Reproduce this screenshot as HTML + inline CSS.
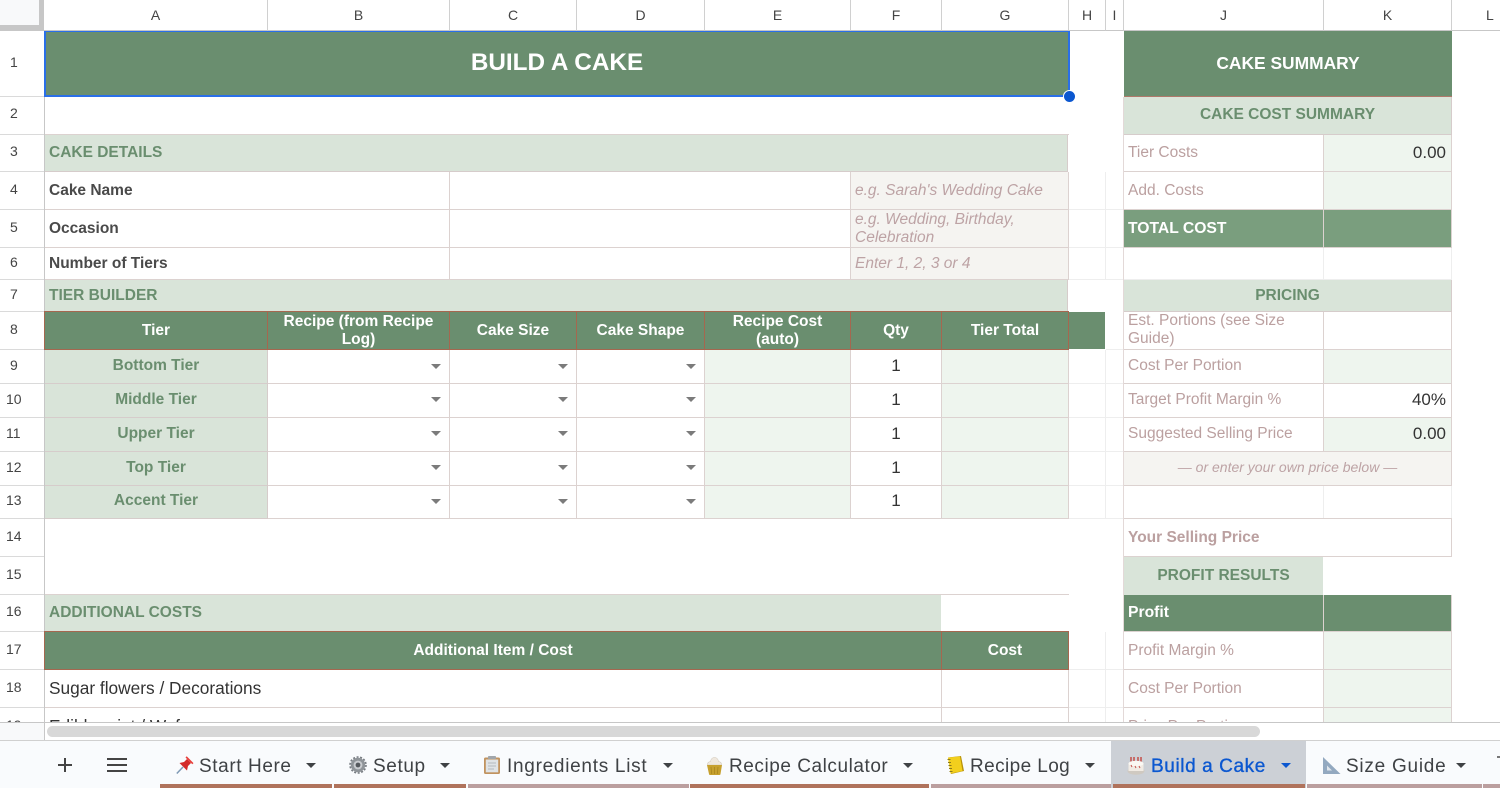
<!DOCTYPE html>
<html><head><meta charset="utf-8"><title>Build a Cake</title>
<style>
html,body{margin:0;padding:0;width:1500px;height:788px;overflow:hidden;background:#fff;font-family:"Liberation Sans",sans-serif}
#grid{position:absolute;left:0;top:0;width:1500px;height:723px;overflow:hidden;background:#fff}
.c{position:absolute;box-sizing:border-box;overflow:hidden;display:flex;align-items:center;padding:0 4px;font-size:15.5px;line-height:18px;color:#333;border-right:1px solid #dcd2d0;border-bottom:1px solid #dcd2d0}
.h{position:absolute;top:0;height:31px;box-sizing:border-box;border-right:1px solid #d0d0d0;border-bottom:1px solid #c7c7c7;font-size:14px;color:#444;display:flex;align-items:center;justify-content:center;padding-bottom:1px}
.n{position:absolute;left:0;width:44px;box-sizing:border-box;border-bottom:1px solid #dadada;font-size:14px;color:#444;display:flex;align-items:center;padding-left:10px;padding-bottom:4px}
.n.w{padding-left:6px}
.A{left:45px;width:223px}.B{left:268px;width:182px}.C{left:450px;width:127px}.D{left:577px;width:128px}.E{left:705px;width:146px}.F{left:851px;width:91px}.G{left:942px;width:127px}.H{left:1069px;width:37px}.I{left:1106px;width:18px}.J{left:1124px;width:200px}.K{left:1324px;width:128px}.JK{left:1124px;width:328px}.AG{left:45px;width:1024px}.AB{left:45px;width:405px}.BE{left:450px;width:401px}.FG{left:851px;width:218px}
.r1{top:32px;height:65px}.r2{top:97px;height:38px}.r3{top:135px;height:37px}.r4{top:172px;height:38px}.r5{top:210px;height:38px}.r6{top:248px;height:32px}.r7{top:280px;height:32px}.r8{top:312px;height:38px}.r9{top:350px;height:34px}.r10{top:384px;height:34px}.r11{top:418px;height:34px}.r12{top:452px;height:34px}.r13{top:486px;height:33px}.r14{top:519px;height:38px}.r15{top:557px;height:38px}.r16{top:595px;height:37px}.r17{top:632px;height:38px}.r18{top:670px;height:38px}.r19{top:708px;height:38px}
.r8,.pd{padding-top:1px}
.r9,.r10,.r11,.r12,.r13{padding-bottom:2px}
.dk{background:#6a8e6f;color:#fff;font-weight:bold;justify-content:center;text-align:center;border:1px solid #a5674f;margin-left:-1px;margin-top:-1px}
.lt{background:#d9e4d9;color:#6a8e6f;font-weight:bold;border-color:#d6cccb}
.ctr{justify-content:center;text-align:center}
.lb{font-weight:bold;color:#4a4a4a}
.hint{background:#f5f4f1;color:#bda3a5;font-style:italic;line-height:18px}
.pl{background:#eef5ee}
.sm{color:#bba0a0}
.f{border-color:#eeeeee}
.q{justify-content:center;color:#333;font-size:17px}
.v{justify-content:flex-end;color:#333;font-size:17px;padding-right:5px}
.ar{position:absolute;width:0;height:0;border-left:5.5px solid transparent;border-right:5.5px solid transparent;border-top:5.5px solid #7b7b7b}
.tab{position:absolute;top:741px;height:52px;display:flex;align-items:center;font-size:19px;letter-spacing:.6px;color:#3f4245;white-space:nowrap}
.car{position:absolute;top:763px;width:0;height:0;border-left:5.5px solid transparent;border-right:5.5px solid transparent;border-top:5.5px solid #3f4245}
.st{position:absolute;top:784px;height:4px}
.ic{position:absolute;top:756px}
</style></head><body>
<div id="grid">
<!-- column headers -->
<div style="position:absolute;left:0;top:0;width:44px;height:31px;background:#c7c7c7"></div>
<div style="position:absolute;left:0;top:0;width:39px;height:25px;background:#f8f9fa"></div>
<div class="h" style="left:44px;width:224px">A</div>
<div class="h" style="left:268px;width:182px">B</div>
<div class="h" style="left:450px;width:127px">C</div>
<div class="h" style="left:577px;width:128px">D</div>
<div class="h" style="left:705px;width:146px">E</div>
<div class="h" style="left:851px;width:91px">F</div>
<div class="h" style="left:942px;width:127px">G</div>
<div class="h" style="left:1069px;width:37px">H</div>
<div class="h" style="left:1106px;width:18px">I</div>
<div class="h" style="left:1124px;width:200px">J</div>
<div class="h" style="left:1324px;width:128px">K</div>
<div class="h" style="left:1452px;width:48px;border-right:0;justify-content:flex-start;padding-left:34px">L</div>
<!-- row headers -->
<div style="position:absolute;left:44px;top:31px;width:1px;height:692px;background:#c7c7c7"></div>
<div class="n" style="top:31px;height:66px">1</div><div class="n" style="top:97px;height:38px;padding-bottom:6px">2</div><div class="n" style="top:135px;height:37px">3</div><div class="n" style="top:172px;height:38px">4</div><div class="n" style="top:210px;height:38px">5</div><div class="n" style="top:248px;height:32px">6</div><div class="n" style="top:280px;height:32px">7</div><div class="n" style="top:312px;height:38px">8</div><div class="n" style="top:350px;height:34px">9</div><div class="n w" style="top:384px;height:34px">10</div><div class="n w" style="top:418px;height:34px">11</div><div class="n w" style="top:452px;height:34px">12</div><div class="n w" style="top:486px;height:33px">13</div><div class="n w" style="top:519px;height:38px">14</div><div class="n w" style="top:557px;height:38px">15</div><div class="n w" style="top:595px;height:37px">16</div><div class="n w" style="top:632px;height:38px">17</div><div class="n w" style="top:670px;height:38px">18</div><div class="n w" style="top:708px;height:38px">19</div>
<!-- faint H/I cells -->
<div class="c f H r4"></div><div class="c f I r4"></div><div class="c f H r5"></div><div class="c f I r5"></div><div class="c f H r6"></div><div class="c f I r6"></div>
<div class="c f I r8"></div>
<div class="c f H r9"></div><div class="c f I r9"></div><div class="c f H r10"></div><div class="c f I r10"></div><div class="c f H r11"></div><div class="c f I r11"></div><div class="c f H r12"></div><div class="c f I r12"></div><div class="c f H r13"></div><div class="c f I r13"></div>
<div class="c f H r17"></div><div class="c f I r17"></div><div class="c f H r18"></div><div class="c f I r18"></div><div class="c f H r19"></div><div class="c f I r19"></div>
<div style="position:absolute;left:1123px;top:97px;width:1px;height:626px;background:#e3d9d8"></div>
<!-- title -->
<div class="c AG r1" style="background:#6a8e6f;color:#fff;font-weight:bold;font-size:24.3px;justify-content:center;border:0;padding:0 0 3px 0">BUILD A CAKE</div>
<div class="c r2 AG" style="border-right:0"></div>
<!-- cake details -->
<div class="c lt r3" style="left:45px;width:1023px">CAKE DETAILS</div>
<div class="c lb AB r4">Cake Name</div><div class="c BE r4"></div><div class="c hint FG r4">e.g. Sarah's Wedding Cake</div>
<div class="c lb AB r5">Occasion</div><div class="c BE r5"></div><div class="c hint FG r5">e.g. Wedding, Birthday, Celebration</div>
<div class="c lb AB r6">Number of Tiers</div><div class="c BE r6"></div><div class="c hint FG r6">Enter 1, 2, 3 or 4</div>
<div class="c lt r7" style="left:45px;width:1023px">TIER BUILDER</div>
<!-- tier header -->
<div style="position:absolute;left:1069px;top:312px;width:36px;height:37px;background:#6a8e6f"></div>
<div class="c dk A r8" style="width:224px;height:39px">Tier</div>
<div class="c dk B r8" style="width:183px;height:39px">Recipe (from Recipe Log)</div>
<div class="c dk C r8" style="width:128px;height:39px">Cake Size</div>
<div class="c dk D r8" style="width:129px;height:39px">Cake Shape</div>
<div class="c dk E r8" style="width:147px;height:39px">Recipe Cost<br>(auto)</div>
<div class="c dk F r8" style="width:92px;height:39px">Qty</div>
<div class="c dk G r8" style="width:128px;height:39px">Tier Total</div>
<!-- tiers -->
<div class="c lt ctr A r9">Bottom Tier</div><div class="c B r9"></div><div class="c C r9"></div><div class="c D r9"></div><div class="c pl E r9"></div><div class="c q F r9">1</div><div class="c pl G r9"></div>
<div class="c lt ctr A r10">Middle Tier</div><div class="c B r10"></div><div class="c C r10"></div><div class="c D r10"></div><div class="c pl E r10"></div><div class="c q F r10">1</div><div class="c pl G r10"></div>
<div class="c lt ctr A r11">Upper Tier</div><div class="c B r11"></div><div class="c C r11"></div><div class="c D r11"></div><div class="c pl E r11"></div><div class="c q F r11">1</div><div class="c pl G r11"></div>
<div class="c lt ctr A r12">Top Tier</div><div class="c B r12"></div><div class="c C r12"></div><div class="c D r12"></div><div class="c pl E r12"></div><div class="c q F r12">1</div><div class="c pl G r12"></div>
<div class="c lt ctr A r13">Accent Tier</div><div class="c B r13"></div><div class="c C r13"></div><div class="c D r13"></div><div class="c pl E r13"></div><div class="c q F r13">1</div><div class="c pl G r13"></div>
<div class="ar" style="left:431px;top:364px"></div><div class="ar" style="left:558px;top:364px"></div><div class="ar" style="left:686px;top:364px"></div>
<div class="ar" style="left:431px;top:397px"></div><div class="ar" style="left:558px;top:397px"></div><div class="ar" style="left:686px;top:397px"></div>
<div class="ar" style="left:431px;top:431px"></div><div class="ar" style="left:558px;top:431px"></div><div class="ar" style="left:686px;top:431px"></div>
<div class="ar" style="left:431px;top:465px"></div><div class="ar" style="left:558px;top:465px"></div><div class="ar" style="left:686px;top:465px"></div>
<div class="ar" style="left:431px;top:499px"></div><div class="ar" style="left:558px;top:499px"></div><div class="ar" style="left:686px;top:499px"></div>
<!-- additional costs -->
<div style="position:absolute;left:45px;top:594px;width:1024px;height:1px;background:#dcd2d0"></div>
<div class="c lt r16" style="left:45px;width:896px;border:0;padding-bottom:2px">ADDITIONAL COSTS</div>
<div class="c dk r17" style="left:45px;width:898px;height:39px">Additional Item / Cost</div>
<div class="c dk G r17" style="width:128px;height:39px">Cost</div>
<div class="c r18" style="left:45px;width:897px;font-size:17.3px;padding-bottom:2px">Sugar flowers / Decorations</div><div class="c G r18"></div>
<div class="c r19" style="left:45px;width:897px;font-size:17.3px;padding-bottom:2px">Edible print / Wafer paper</div><div class="c G r19"></div>
<!-- summary -->
<div class="c JK" style="top:31px;height:66px;background:#6a8e6f;color:#fff;font-weight:bold;font-size:17.4px;justify-content:center;border:0;border-bottom:1px solid #b0796a;padding-bottom:2px">CAKE SUMMARY</div>
<div class="c lt ctr JK r2" style="padding-bottom:2px">CAKE COST SUMMARY</div>
<div class="c sm J r3">Tier Costs</div><div class="c pl v K r3">0.00</div>
<div class="c sm J r4">Add. Costs</div><div class="c pl K r4"></div>
<div class="c J r5" style="background:#7a9e7e;color:#fff;font-weight:bold;font-size:15.7px">TOTAL COST</div><div class="c K r5" style="background:#7a9e7e"></div>
<div class="c f J r6"></div><div class="c f K r6"></div>
<div class="c lt ctr JK r7">PRICING</div>
<div class="c sm J r8" style="padding-right:20px;padding-top:0;padding-bottom:1px">Est. Portions (see Size Guide)</div><div class="c K r8"></div>
<div class="c sm J r9">Cost Per Portion</div><div class="c pl K r9"></div>
<div class="c sm J r10">Target Profit Margin %</div><div class="c v K r10">40%</div>
<div class="c sm J r11">Suggested Selling Price</div><div class="c pl v K r11">0.00</div>
<div class="c hint ctr JK r12" style="font-size:14px;padding-bottom:4px">— or enter your own price below —</div>
<div class="c f J r13"></div><div class="c f K r13"></div>
<div class="c JK r14" style="color:#bba0a0;font-weight:bold;border-top:1px solid #dcd2d0;margin-top:-1px;height:39px">Your Selling Price</div>
<div class="c lt ctr J r15" style="border:0;width:199px">PROFIT RESULTS</div>
<div class="c J r16" style="background:#6a8e6f;color:#fff;font-weight:bold;font-size:15.7px">Profit</div><div class="c K r16" style="background:#6a8e6f"></div>
<div class="c sm J r17">Profit Margin %</div><div class="c pl K r17"></div>
<div class="c sm J r18">Cost Per Portion</div><div class="c pl K r18"></div>
<div class="c sm J r19">Price Per Portion</div><div class="c pl K r19"></div>
<!-- selection -->
<div style="position:absolute;left:44px;top:31px;width:1026px;height:66px;box-sizing:border-box;border:2px solid #2a6fe8;border-top-width:1px;pointer-events:none"></div>
<div style="position:absolute;left:1063px;top:90px;width:11px;height:11px;border-radius:50%;background:#0b57d0;border:1px solid #fff"></div>
<div style="position:absolute;left:0;top:722px;width:1500px;height:1px;background:#c7c7c7"></div>
</div>
<!-- scrollbar -->
<div style="position:absolute;left:0;top:723px;width:1500px;height:18px;background:#fff;border-bottom:1px solid #d0d0d0;box-sizing:border-box"></div>
<div style="position:absolute;left:0;top:723px;width:44px;height:17px;background:#f8f9fa;border-right:1px solid #c7c7c7"></div>
<div style="position:absolute;left:47px;top:726px;width:1213px;height:11px;border-radius:6px;background:#d8d8d8"></div>
<!-- tab bar -->
<div style="position:absolute;left:0;top:741px;width:1500px;height:47px;background:#f9fbfd"></div>
<div style="position:absolute;left:1111px;top:741px;width:195px;height:47px;background:#ccd0d6"></div>
<svg style="position:absolute;left:55px;top:755px" width="20" height="20" viewBox="0 0 20 20"><path d="M10 3v14M3 10h14" stroke="#444" stroke-width="2" fill="none"/></svg>
<svg style="position:absolute;left:107px;top:757px" width="20" height="16" viewBox="0 0 20 16"><path d="M0 2h20M0 8h20M0 14h20" stroke="#444" stroke-width="2" fill="none"/></svg>
<div class="st" style="left:160px;width:172px;background:#b0735c"></div>
<div class="st" style="left:334px;width:132px;background:#b0735c"></div>
<div class="st" style="left:468px;width:221px;background:#bb9f9f"></div>
<div class="st" style="left:690px;width:239px;background:#b0735c"></div>
<div class="st" style="left:931px;width:180px;background:#bb9f9f"></div>
<div class="st" style="left:1113px;width:192px;background:#b0735c"></div>
<div class="st" style="left:1307px;width:175px;background:#bb9f9f"></div>
<div class="st" style="left:1483px;width:17px;background:#bb9f9f"></div>
<!-- Start Here -->
<svg class="ic" style="left:176px;top:756px" width="18" height="18" viewBox="0 0 18 18"><path d="M.8 17.500L7 11" stroke="#7f9ab5" stroke-width="1.500"/><path d="M3.500 7l7.500 7.500 1-4.500 3-3-4-4-3 3z" fill="#d32a2a"/><path d="M9.500 1.500l1.200-1.200 6.800 6.800-1.200 1.200z" fill="#e8403c"/></svg>
<div class="tab" style="left:199px">Start Here</div><div class="car" style="left:306px"></div>
<!-- Setup -->
<svg class="ic" style="left:349px;top:756px" width="18" height="18" viewBox="0 0 18 18"><circle cx="9" cy="9" r="7.200" fill="#8f9499"/><circle cx="9" cy="9" r="8" fill="none" stroke="#777c82" stroke-width="1.600" stroke-dasharray="2 1.600"/><circle cx="9" cy="9" r="4.400" fill="#c9ccd0"/><circle cx="9" cy="9" r="2.400" fill="#55595e"/></svg>
<div class="tab" style="left:373px">Setup</div><div class="car" style="left:440px"></div>
<!-- Ingredients -->
<svg class="ic" style="left:483px;top:756px" width="18" height="18" viewBox="0 0 18 18"><rect x="1" y="1.500" width="16" height="16.500" rx="1.500" fill="#c1935f"/><rect x="2.800" y="3.500" width="12.400" height="12.800" fill="#dfe3e6"/><rect x="5" y="0" width="8" height="3" rx=".8" fill="#a1a6ab"/><path d="M5 7h8M5 10h8M5 13h6" stroke="#b3b8bd" stroke-width="1"/></svg>
<div class="tab" style="left:507px;letter-spacing:.72px">Ingredients List</div><div class="car" style="left:663px"></div>
<!-- Recipe Calculator -->
<svg class="ic" style="left:706px;top:757px" width="17" height="18" viewBox="0 0 17 18"><path d="M1.500 8c-.5-2.500 2-3.500 3-3.500C4.800 2 6.500.5 8.500.5s3.700 1.500 4 4c1 0 3.500 1 3 3.500z" fill="#efe8de" stroke="#cfc5b6" stroke-width=".6"/><path d="M1 8h15l-1.500 9a1 1 0 0 1-1 1h-9.500a1 1 0 0 1-1-1z" fill="#c6a02e"/><path d="M5 10l.7 7M8.500 10v7M12 10l-.7 7" stroke="#a8851f" stroke-width=".8"/></svg>
<div class="tab" style="left:729px;letter-spacing:.55px">Recipe Calculator</div><div class="car" style="left:903px"></div>
<!-- Recipe Log -->
<svg class="ic" style="left:947px;top:756px" width="17" height="18" viewBox="0 0 17 18"><path d="M1 1.500L14 0l3 15-13 3z" fill="#b89209"/><path d="M1 1.500L13 .5l2.500 14.500L3.500 17.500z" fill="#f2cf1d"/><path d="M.5 3.500h3M1 6.500h3M1.500 9.500h3M2 12.500h3M2.500 15.500h3" stroke="#8c7a1a" stroke-width="1"/></svg>
<div class="tab" style="left:970px;letter-spacing:.4px">Recipe Log</div><div class="car" style="left:1085px"></div>
<!-- Build a Cake -->
<svg class="ic" style="left:1127px;top:756px" width="18" height="19" viewBox="0 0 18 19"><path d="M4 1v6M7 1v6M11 1v6M14 1v6" stroke="#c4453e" stroke-width="1.400"/><ellipse cx="9" cy="15" rx="8.500" ry="3.800" fill="#cfc9c1"/><rect x="1.500" y="7" width="15" height="8" fill="#f1ebe4"/><ellipse cx="9" cy="7.500" rx="7.500" ry="2.800" fill="#fbf8f3"/><path d="M4 9l1 2M8 10l1 2M12 10l1 2" stroke="#c7574f" stroke-width="1"/></svg>
<div class="tab" style="left:1151px;color:#0b57d0;-webkit-text-stroke:.35px #0b57d0">Build a Cake</div><div class="car" style="left:1281px;border-top-color:#0b57d0"></div>
<!-- Size Guide -->
<svg class="ic" style="left:1322px;top:756px" width="19" height="19" viewBox="0 0 19 19"><path d="M1 1v17h17.500z" fill="#93a9c0"/><path d="M5 9.500v5h5z" fill="#dfe5eb"/></svg>
<div class="tab" style="left:1346px;letter-spacing:.75px">Size Guide</div><div class="car" style="left:1456px"></div>
<div style="position:absolute;left:1497px;top:756px;width:3px;height:2px;background:#777"></div>
</body></html>
